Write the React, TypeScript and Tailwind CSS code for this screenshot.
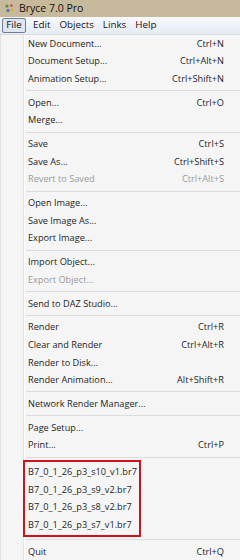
type Item = { label: string; shortcut?: string; disabled?: boolean };

const groups: Item[][] = [
  [
    { label: "New Document...", shortcut: "Ctrl+N" },
    { label: "Document Setup...", shortcut: "Ctrl+Alt+N" },
    { label: "Animation Setup...", shortcut: "Ctrl+Shift+N" },
  ],
  [{ label: "Open...", shortcut: "Ctrl+O" }, { label: "Merge..." }],
  [
    { label: "Save", shortcut: "Ctrl+S" },
    { label: "Save As...", shortcut: "Ctrl+Shift+S" },
    { label: "Revert to Saved", shortcut: "Ctrl+Alt+S", disabled: true },
  ],
  [{ label: "Open Image..." }, { label: "Save Image As..." }, { label: "Export Image..." }],
  [{ label: "Import Object..." }, { label: "Export Object...", disabled: true }],
  [{ label: "Send to DAZ Studio..." }],
  [
    { label: "Render", shortcut: "Ctrl+R" },
    { label: "Clear and Render", shortcut: "Ctrl+Alt+R" },
    { label: "Render to Disk..." },
    { label: "Render Animation...", shortcut: "Alt+Shift+R" },
  ],
  [{ label: "Network Render Manager..." }],
  [{ label: "Page Setup..." }, { label: "Print...", shortcut: "Ctrl+P" }],
];

const recent = [
  "B7_0_1_26_p3_s10_v1.br7",
  "B7_0_1_26_p3_s9_v2.br7",
  "B7_0_1_26_p3_s8_v2.br7",
  "B7_0_1_26_p3_s7_v1.br7",
];

const Row = ({ item }: { item: Item }) => (
  <div
    className={`flex h-[17.6px] items-center justify-between pl-[27px] pr-[16px] ${
      item.disabled ? "text-[#9a9a9a]" : "text-[#1e1e1e]"
    }`}
  >
    <span>{item.label}</span>
    {item.shortcut && <span>{item.shortcut}</span>}
  </div>
);

const Separator = () => (
  <div className="flex h-[6.2px] items-center pl-[25px]">
    <div className="h-px w-full bg-[#dcdcdc]" />
  </div>
);

const App = () => {
  return (
    <div
      className="h-[560px] w-[240px] overflow-hidden bg-[#f5f5f5] text-[9.2px]"
      style={{ fontFamily: '"Open Sans", "Noto Sans", sans-serif' }}
    >
      {/* title bar */}
      <div className="flex h-[17px] items-center gap-[3px] bg-[#c7b99c] pl-[4px] text-[10.5px] text-[#111]">
        <svg width="12" height="11" viewBox="0 0 12 11">
          <circle cx="3" cy="3" r="1.6" fill="#5a8f3a" />
          <circle cx="7.5" cy="2.5" r="1.3" fill="#c94a3a" />
          <circle cx="4" cy="7.5" r="1.5" fill="#3a6fb0" />
          <circle cx="8.5" cy="7" r="1.6" fill="#e0b030" />
        </svg>
        <span>Bryce 7.0 Pro</span>
      </div>

      {/* menu bar */}
      <div className="flex h-[18px] items-center border-b border-[#d8dde6] bg-gradient-to-b from-[#f6f8fc] to-[#e6ebf3] text-[9.8px] text-[#111]">
        <div className="ml-[2px] flex h-[15px] w-[24px] items-center justify-center rounded-[2px] border border-[#6d7f99] bg-[#dfe6f0]">
          File
        </div>
        <span className="ml-[7px]">Edit</span>
        <span className="ml-[9px]">Objects</span>
        <span className="ml-[9px]">Links</span>
        <span className="ml-[9px]">Help</span>
      </div>

      {/* dropdown */}
      <div className="relative border-l border-[#e2e2e2]">
        <div className="absolute bottom-0 left-[22px] top-0 w-px bg-[#e2e3e3]" />
        <div className="absolute bottom-0 left-[23px] top-0 w-px bg-white" />
        <div className="relative">
          {groups.map((g, i) => (
            <div key={i}>
              {g.map((item) => (
                <Row key={item.label} item={item} />
              ))}
              <Separator />
            </div>
          ))}
          <div className="ml-[22px] w-[118px] border-2 border-[#d0121b] bg-[#f5f5f5] py-px">
            {recent.map((r) => (
              <div key={r} className="flex h-[17.6px] items-center pl-[3px] text-[#1e1e1e]">
                {r}
              </div>
            ))}
          </div>
          <Separator />
          <Row item={{ label: "Quit", shortcut: "Ctrl+Q" }} />
        </div>
      </div>
    </div>
  );
};

export default App;
